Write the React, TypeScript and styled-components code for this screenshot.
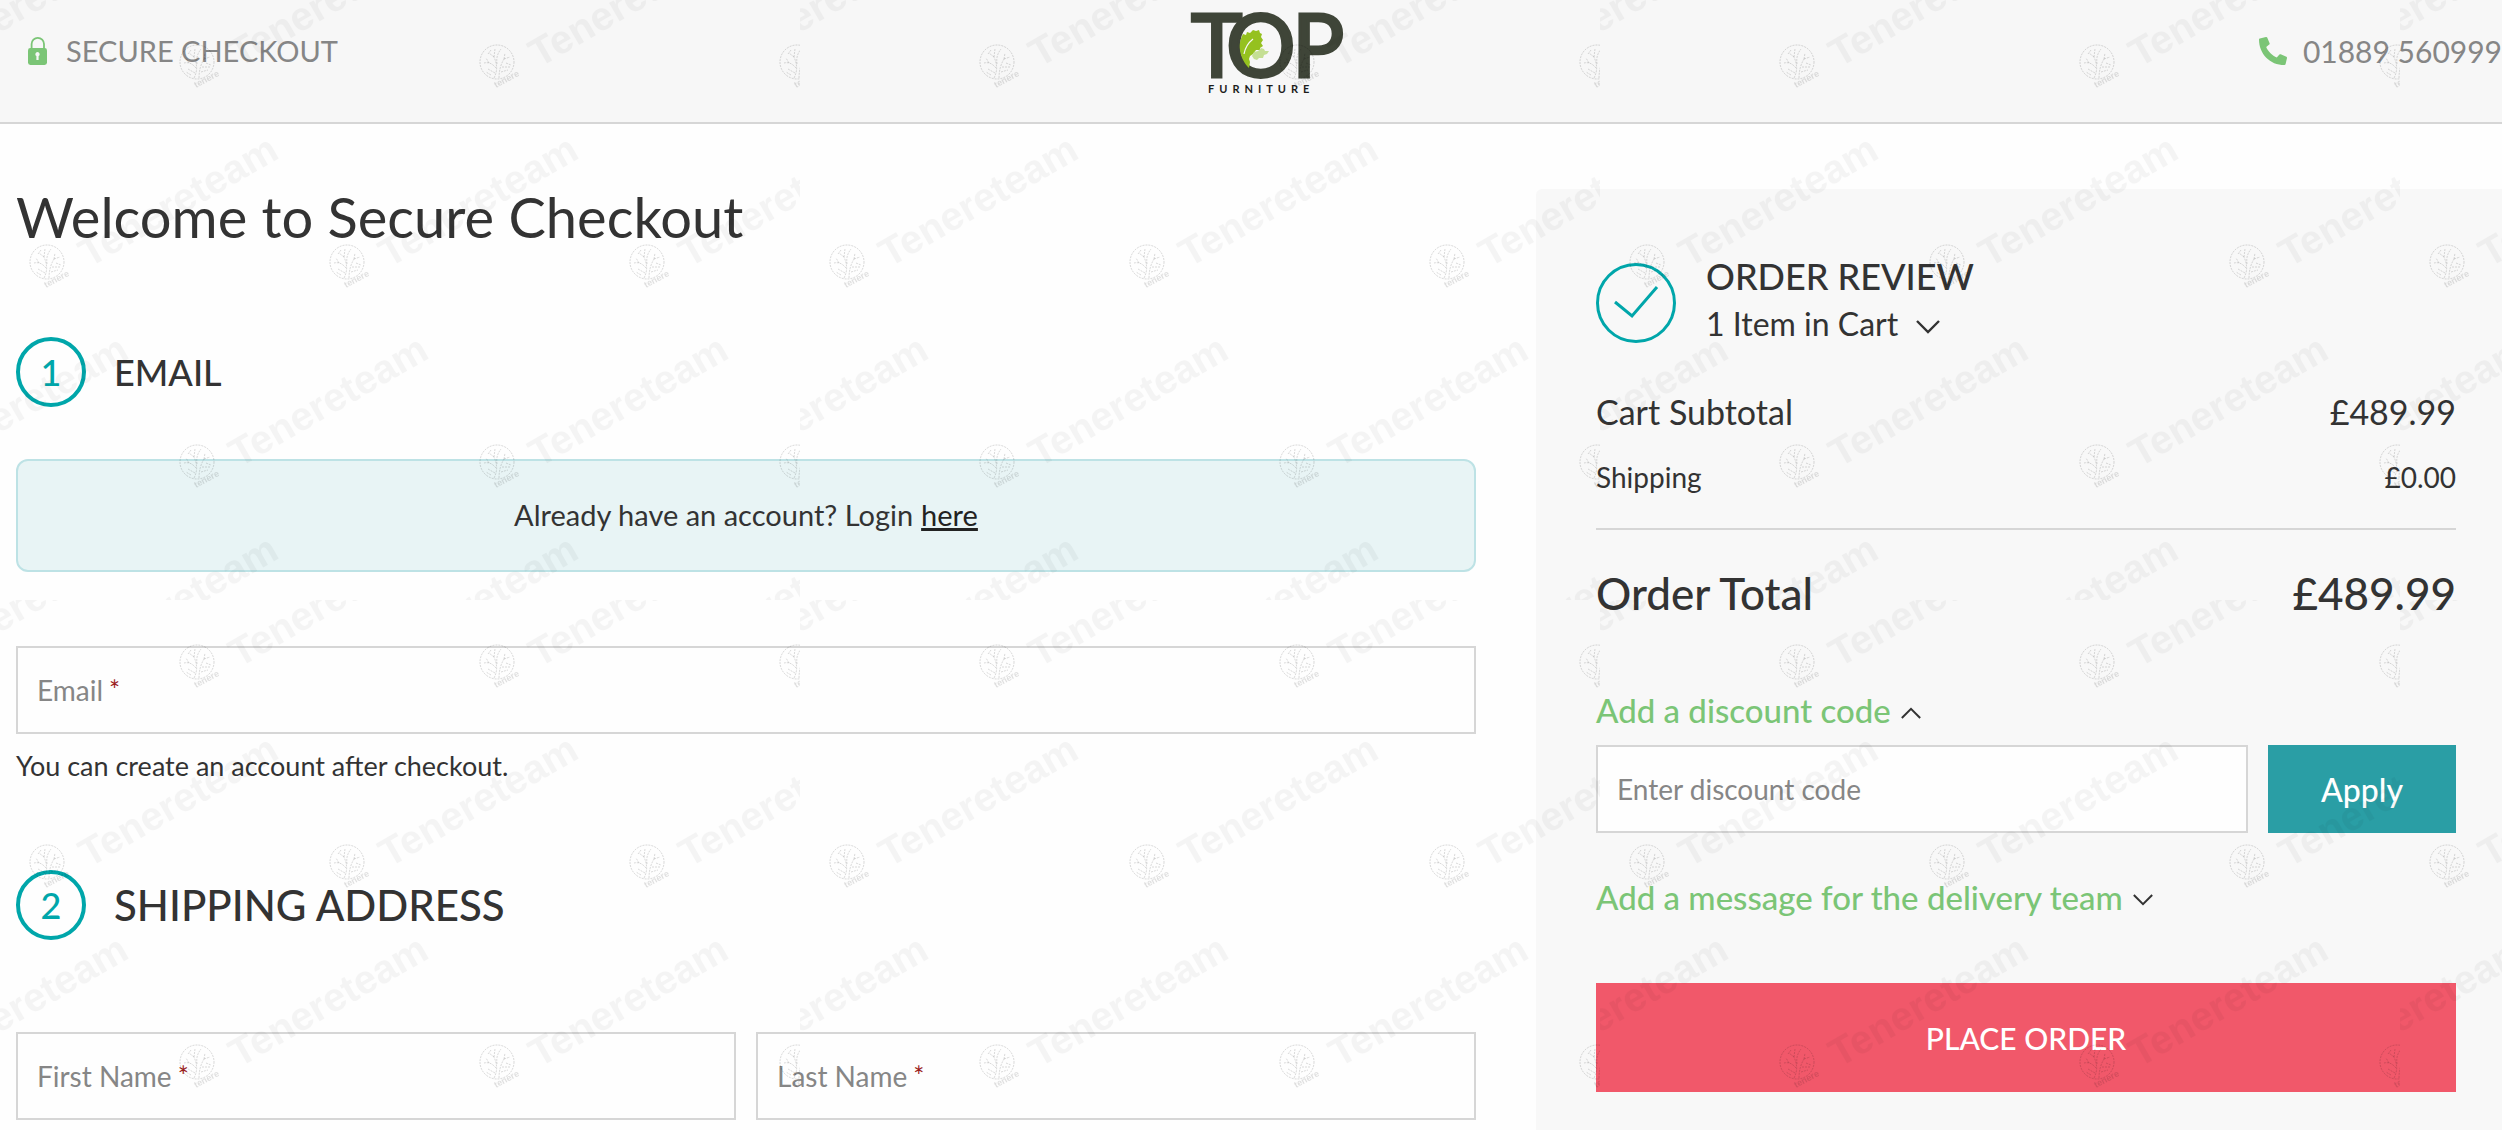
import React from "react";
import styled, { createGlobalStyle } from "styled-components";

const font = `Lato, "Noto Sans", sans-serif`;
const ink = "#333333";
const teal = "#00a6aa";
const green = "#7bc576";
const line = "#d6d6d6";
const muted = "#868686";

const Global = createGlobalStyle`
  *, *::before, *::after { box-sizing: border-box; }
  body { margin: 0; background: #fefefe; color: ${ink}; font-family: ${font}; }
  h1, h2, p { margin: 0; font-weight: 400; }
  button, input { font-family: inherit; color: inherit; }
`;

const Page = styled.div`
  min-height: 100vh;
  display: flex;
  flex-direction: column;
  overflow: hidden;
`;

const Header = styled.header`
  display: grid;
  grid-template-columns: 1fr auto 1fr;
  align-items: start;
  height: 124px;
  padding-left: 28px;
  background: #f7f7f7;
  border-bottom: 2px solid ${line};
`;

const HeaderNote = styled.div<{ $end?: boolean }>`
  display: flex;
  align-items: center;
  justify-content: ${(p) => (p.$end ? "flex-end" : "flex-start")};
  gap: 18px;
  padding-top: 32px;
  font-size: ${(p) => (p.$end ? 30 : 29)}px;
  line-height: 38px;
  color: ${muted};
  white-space: nowrap;
`;

const PhoneLink = styled.a`
  display: flex;
  align-items: center;
  gap: 16px;
  color: inherit;
  text-decoration: none;
`;

const Logo = styled.svg`
  display: block;
`;

const Columns = styled.main`
  flex: 1;
  display: grid;
  grid-template-columns: 1460fr 966fr;
  gap: 60px;
  padding: 65px 0 0 16px;
`;

const Form = styled.form`
  display: flex;
  flex-direction: column;
`;

const Title = styled.h1`
  font-size: 56px;
  line-height: 56px;
  margin-bottom: 92px;
`;

const StepHead = styled.div`
  display: flex;
  align-items: center;
  gap: 28px;
  height: 70px;
`;

const StepNumber = styled.span`
  display: flex;
  align-items: center;
  justify-content: center;
  width: 70px;
  height: 70px;
  border: 4px solid ${teal};
  border-radius: 50%;
  color: ${teal};
  font-size: 36px;
  font-weight: 500;
`;

const StepTitle = styled.h2<{ $large?: boolean }>`
  font-size: ${(p) => (p.$large ? 42 : 36)}px;
  line-height: 48px;
  font-weight: 500;
`;

const LoginNotice = styled.p`
  display: flex;
  align-items: center;
  justify-content: center;
  gap: 8px;
  height: 113px;
  margin: 52px 0 74px;
  padding-bottom: 2px;
  border: 2px solid #bde2e5;
  border-radius: 12px;
  background: #e8f4f5;
  font-size: 29px;
  line-height: 36px;
`;

const LoginLink = styled.a`
  color: #222222;
  text-decoration: underline;
  text-decoration-thickness: 3px;
`;

const Field = styled.div`
  display: flex;
  align-items: center;
  flex: 1;
  min-width: 0;
  height: 88px;
  padding: 0 19px;
  border: 2px solid ${line};
  background: #fefefe;
`;

const FieldLabel = styled.label`
  display: flex;
  gap: 6px;
  font-size: 28px;
  line-height: 36px;
  color: ${muted};
  white-space: nowrap;
`;

const Required = styled.span`
  color: #9b1c1c;
  font-size: 26px;
`;

const TextInput = styled.input`
  flex: 1;
  min-width: 0;
  height: 100%;
  padding: 0;
  border: 0;
  outline: 0;
  background: transparent;
  font-size: 28px;
  &::placeholder { color: ${muted}; opacity: 1; }
`;

const Row = styled.div`
  display: flex;
  gap: 20px;
`;

const Hint = styled.p`
  font-size: 27px;
  line-height: 36px;
  margin: 14px 0 86px;
`;

const NameRow = styled(Row)`
  margin-top: 92px;
`;

const Panel = styled.aside`
  display: flex;
  flex-direction: column;
  padding: 59px 46px 36px 60px;
  border-radius: 6px 0 0 0;
  background: #f8f8f8;
`;

const ReviewHead = styled.div`
  display: flex;
  align-items: center;
  gap: 30px;
  margin-bottom: 34px;
`;

const CheckBadge = styled.svg`
  flex: none;
  margin-top: 14px;
`;

const ReviewTitle = styled.h2`
  font-size: 36px;
  line-height: 56px;
  font-weight: 500;
`;

const Toggle = styled.button<{ $green?: boolean }>`
  display: flex;
  align-items: center;
  align-self: flex-start;
  gap: ${(p) => (p.$green ? "10px" : "18px")};
  padding: 0;
  border: 0;
  background: none;
  color: ${(p) => (p.$green ? green : ink)};
  font-size: ${(p) => (p.$green ? 33 : 32)}px;
  line-height: 40px;
  font-weight: ${(p) => (p.$green ? 500 : 400)};
  cursor: pointer;
  svg { margin-top: 6px; }
`;

const Totals = styled.table`
  width: 100%;
  margin-bottom: 35px;
  border-collapse: collapse;
  th, td { padding: 0; text-align: left; font-weight: 400; }
  td { text-align: right; }
`;

const TotalLine = styled.tr<{ $size: number; $height: number; $weight?: number }>`
  height: ${(p) => p.$height}px;
  && > * {
    font-size: ${(p) => p.$size}px;
    font-weight: ${(p) => p.$weight ?? 400};
  }
`;

const ShippingLine = styled(TotalLine)`
  border-bottom: 2px solid ${line};
  && > * { padding-bottom: 18px; }
`;

const DiscountRow = styled(Row)`
  margin: 15px 0 44px;
`;

const Apply = styled.button`
  width: 188px;
  height: 88px;
  border: 0;
  background: #2a9ea5;
  color: #ffffff;
  font-size: 32px;
  font-weight: 500;
`;

const PlaceOrder = styled.button`
  height: 109px;
  margin-top: 66px;
  border: 0;
  background: #f1586a;
  color: #ffffff;
  font-size: 30px;
  font-weight: 500;
`;

const WatermarkLayer = styled.svg`
  position: fixed;
  inset: 0;
  width: 100%;
  height: 100%;
  pointer-events: none;
`;

const Chevron = ({ size, up }: { size: number; up?: boolean }) => (
  <svg width={size} height={size / 2 + 2} viewBox="0 0 24 14" fill="none" stroke={ink} strokeWidth="2.4" aria-hidden="true">
    <path d={up ? "M1 13 12 2l11 11" : "M1 1l11 11L23 1"} />
  </svg>
);

const Lock = () => (
  <svg width="20" height="30" viewBox="0 0 20 30" aria-hidden="true">
    <path d="M3.6 13V8a6.2 6.2 0 0 1 12.4 0v5" fill="none" stroke={green} strokeWidth="1.8" />
    <rect y="12" width="19" height="17" rx="2.4" fill={green} />
    <path d="M9.5 16a2.2 2.2 0 0 1 1.1 4.1V24H8.4v-3.9A2.2 2.2 0 0 1 9.5 16Z" fill="#f7f7f7" />
  </svg>
);

const Phone = () => (
  <svg width="28" height="28" viewBox="0 0 28 28" aria-hidden="true">
    <path
      d="M0 2.4Q0 1.6.8 1.4L7 0Q7.8-.1 8.2.6L10.6 6.2Q10.9 7 10.2 7.5L7.2 10C9 14.4 13.4 18.6 17.8 20.6L20.4 17.6Q20.9 17 21.7 17.3L27.4 19.8Q28.1 20.2 28 21L26.6 27Q26.4 28 25.4 28C11 28 0 16.8 0 2.4Z"
      fill={green}
    />
  </svg>
);

const TopLogo = () => (
  <Logo width="164" height="100" viewBox="0 0 164 100" role="img" aria-label="Top Furniture">
    <text x="8 43 109" y="77" fontFamily={font} fontSize="87" fontWeight="400" fill="#3f4538" stroke="#3f4538" strokeWidth="3">TOP</text>
    <path
      d="M57 50C56 43 58 38 60 34l3 1 1-3 3 1 3-3 3 1 3-1 1 3 2 1-1 3 2 3-2 3 2 3-3 2 0 2-4 0-3 4-3 2-1 3 1 3-1 6C62 64 58 58 57 50Z"
      fill="#95c11f"
    />
    <path d="M69 56l2-4 4-1 3-3 3 1 1 2 4 0-2 3-3 1-1 3-4 0-2 2-3-1Z" fill="#c5df94" />
    <path d="M61 54c1-6 4-11 9-15" fill="none" stroke="#f7f7f7" strokeWidth="1.2" />
    <text x="25" y="93" fontFamily={font} fontSize="11" fontWeight="700" letterSpacing="5" fill="#1d1d1b">FURNITURE</text>
  </Logo>
);

const stamps = [
  [-103, 62], [197, 62], [497, 62], [797, 62],
  [47, 262], [347, 262], [647, 262],
  [-103, 462], [197, 462], [497, 462], [797, 462],
  [47, 662], [347, 662], [647, 662],
];

const Watermark = () => (
  <WatermarkLayer aria-hidden="true">
    <defs>
      <pattern id="stamp-tile" width="800" height="600" patternUnits="userSpaceOnUse">
        {stamps.map(([x, y]) => (
          <g key={`${x}-${y}`} transform={`translate(${x} ${y})`} fill="#000000">
            <g fill="none" stroke="#000000" strokeOpacity="0.14" strokeWidth="1">
              <circle r="17" strokeDasharray="2 1" />
              <path
                d="M-3 16C1 8 0 2-3-5M2 16C2 8 4 2 7-3M-1 6C-5 1-9 0-13 1M0 2C-1-5 1-9 4-13M-3-5l-5-4M-3-5l1-8M7-3l6-2M7-3l1-6M-8 1l-3-5M5 5l8 0M4 10l7-2M-2 11l-7-4M-6 13l-5-3M-9-8l3-4M9 1l5 2"
                strokeDasharray="2 1"
              />
            </g>
            <text x="-1" y="26" transform="rotate(-28 -1 26)" fontFamily="Liberation Sans, sans-serif" fontSize="9" fontWeight="700" opacity="0.12">tenere</text>
            <text x="42" y="6" transform="rotate(-30 42 6)" fontFamily="Liberation Sans, sans-serif" fontSize="40" fontWeight="700" opacity="0.04">Tenereteam</text>
          </g>
        ))}
      </pattern>
    </defs>
    <rect width="100%" height="100%" fill="url(#stamp-tile)" />
  </WatermarkLayer>
);

const RequiredField = ({ id, label, type = "text" }: { id: string; label: string; type?: string }) => (
  <Field>
    <FieldLabel htmlFor={id}>
      {label}
      <Required>*</Required>
    </FieldLabel>
    <TextInput id={id} type={type} required />
  </Field>
);

export default function App() {
  return (
    <Page>
      <Global />
      <Header>
        <HeaderNote>
          <Lock />
          SECURE CHECKOUT
        </HeaderNote>
        <TopLogo />
        <HeaderNote $end>
          <PhoneLink href="tel:01889560999">
            <Phone />
            01889 560999
          </PhoneLink>
        </HeaderNote>
      </Header>
      <Columns>
        <Form>
          <Title>Welcome to Secure Checkout</Title>
          <StepHead>
            <StepNumber>1</StepNumber>
            <StepTitle>EMAIL</StepTitle>
          </StepHead>
          <LoginNotice>
            Already have an account? Login <LoginLink href="#login">here</LoginLink>
          </LoginNotice>
          <Row>
            <RequiredField id="email" label="Email" type="email" />
          </Row>
          <Hint>You can create an account after checkout.</Hint>
          <StepHead>
            <StepNumber>2</StepNumber>
            <StepTitle $large>SHIPPING ADDRESS</StepTitle>
          </StepHead>
          <NameRow>
            <RequiredField id="first-name" label="First Name" />
            <RequiredField id="last-name" label="Last Name" />
          </NameRow>
        </Form>
        <Panel>
          <ReviewHead>
            <CheckBadge width="80" height="80" viewBox="0 0 80 80" fill="none" stroke={teal} strokeWidth="3" aria-hidden="true">
              <circle cx="40" cy="40" r="38.5" />
              <path d="M19 39l17 14 25-29" />
            </CheckBadge>
            <div>
              <ReviewTitle>ORDER REVIEW</ReviewTitle>
              <Toggle type="button">
                1 Item in Cart
                <Chevron size={24} />
              </Toggle>
            </div>
          </ReviewHead>
          <Totals>
            <tbody>
              <TotalLine $size={34} $height={66}>
                <th scope="row">Cart Subtotal</th>
                <td>£489.99</td>
              </TotalLine>
              <ShippingLine $size={28} $height={85}>
                <th scope="row">Shipping</th>
                <td>£0.00</td>
              </ShippingLine>
              <TotalLine $size={44} $height={126} $weight={500}>
                <th scope="row">Order Total</th>
                <td>£489.99</td>
              </TotalLine>
            </tbody>
          </Totals>
          <Toggle type="button" $green aria-expanded="true">
            Add a discount code
            <Chevron size={20} up />
          </Toggle>
          <DiscountRow>
            <Field>
              <TextInput type="text" aria-label="Enter discount code" placeholder="Enter discount code" />
            </Field>
            <Apply type="button">Apply</Apply>
          </DiscountRow>
          <Toggle type="button" $green aria-expanded="false">
            Add a message for the delivery team
            <Chevron size={20} />
          </Toggle>
          <PlaceOrder type="button">PLACE ORDER</PlaceOrder>
        </Panel>
      </Columns>
      <Watermark />
    </Page>
  );
}
